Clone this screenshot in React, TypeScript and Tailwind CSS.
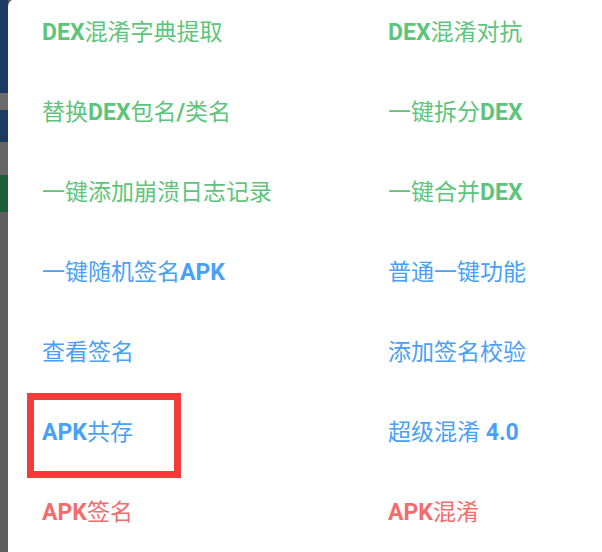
import React from "react";

type Part = { t: string; b?: boolean };
type Item = { parts: Part[]; color: string; boxed?: boolean };

const G = "text-[#5ec47c]";
const B = "text-[#4a9ff7]";
const R = "text-[#f26d6d]";

const rows: [Item, Item][] = [
  [
    { parts: [{ t: "DEX", b: true }, { t: "混淆字典提取" }], color: G },
    { parts: [{ t: "DEX", b: true }, { t: "混淆对抗" }], color: G },
  ],
  [
    { parts: [{ t: "替换" }, { t: "DEX", b: true }, { t: "包名" }, { t: "/", b: true }, { t: "类名" }], color: G },
    { parts: [{ t: "一键拆分" }, { t: "DEX", b: true }], color: G },
  ],
  [
    { parts: [{ t: "一键添加崩溃日志记录" }], color: G },
    { parts: [{ t: "一键合并" }, { t: "DEX", b: true }], color: G },
  ],
  [
    { parts: [{ t: "一键随机签名" }, { t: "APK", b: true }], color: B },
    { parts: [{ t: "普通一键功能" }], color: B },
  ],
  [
    { parts: [{ t: "查看签名" }], color: B },
    { parts: [{ t: "添加签名校验" }], color: B },
  ],
  [
    { parts: [{ t: "APK", b: true }, { t: "共存" }], color: B, boxed: true },
    { parts: [{ t: "超级混淆 " }, { t: "4.0", b: true }], color: B },
  ],
  [
    { parts: [{ t: "APK", b: true }, { t: "签名" }], color: R },
    { parts: [{ t: "APK", b: true }, { t: "混淆" }], color: R },
  ],
];

function Cell({ item }: { item: Item }) {
  return (
    <div className="relative h-[80px] flex items-center">
      <span className={`text-[23px] leading-none whitespace-nowrap ${item.color}`}>
        {item.parts.map((p, i) => (
          <span key={i} className={p.b ? "font-bold" : "font-normal"}>
            {p.t}
          </span>
        ))}
      </span>
      {item.boxed && (
        <div className="absolute left-[-15px] top-[1px] w-[154px] h-[85px] border-[7px] border-[#f53a3a]" />
      )}
    </div>
  );
}

export default function App() {
  return (
    <div
      className="w-[602px] h-[552px] overflow-hidden flex bg-white"
      style={{ fontFamily: 'Roboto, "Noto Sans CJK SC", "Noto Sans", sans-serif' }}
    >
      <div className="w-[8px] shrink-0 flex flex-col">
        <div className="h-[93px] bg-[#1c3b60]" />
        <div className="h-[17px] bg-[#6b6b6b]" />
        <div className="h-[32px] bg-[#1c3b60]" />
        <div className="h-[33px] bg-[#666666]" />
        <div className="h-[37px] bg-[#1d5e3a]" />
        <div className="flex-1 bg-[#5f5f5f]" />
      </div>
      <div className="flex-1 bg-[#5f5f5f] relative">
        <div className="absolute inset-0 -top-[1px] bg-white rounded-tl-[8px]" />
        <div className="relative -mt-[8px] pl-[34px] grid grid-cols-[346px_1fr]">
          {rows.map(([l, r], i) => (
            <React.Fragment key={i}>
              <Cell item={l} />
              <Cell item={r} />
            </React.Fragment>
          ))}
        </div>
      </div>
    </div>
  );
}
